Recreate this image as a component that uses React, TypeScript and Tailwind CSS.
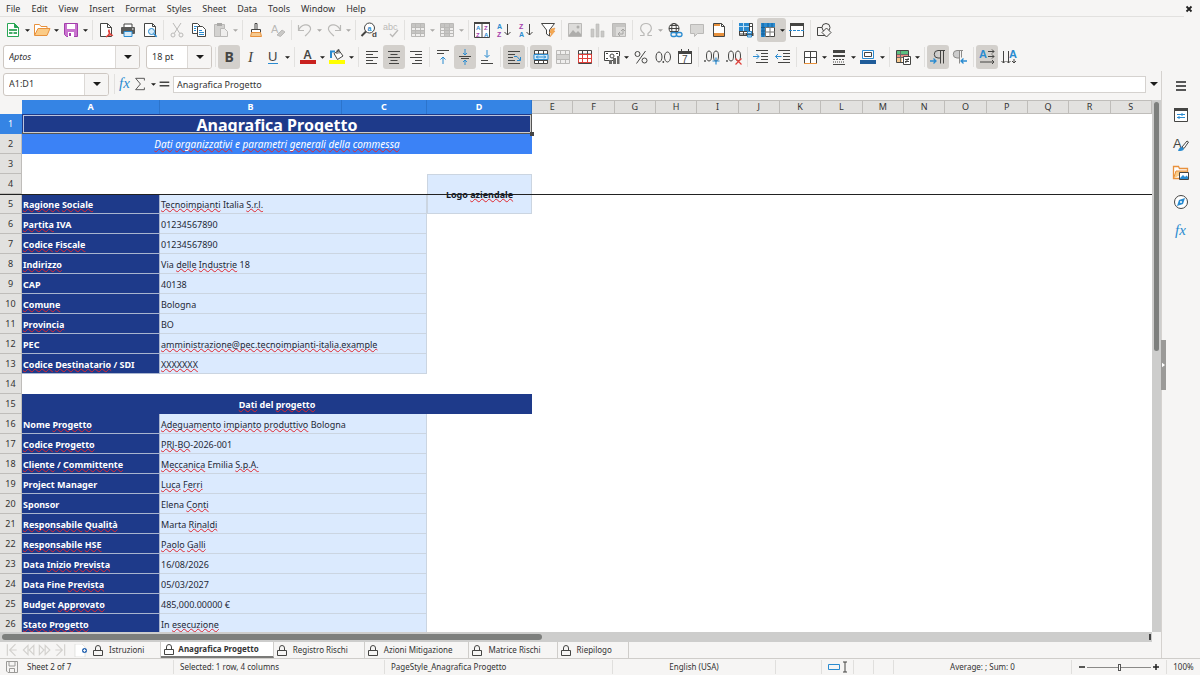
import type { ReactNode } from 'react'

type Tool = { icon: string; label: string; arrow?: boolean; on?: boolean; off?: boolean }

const MENUS = ['File', 'Edit', 'View', 'Insert', 'Format', 'Styles', 'Sheet', 'Data', 'Tools', 'Window', 'Help']

const INK = '#454543'
const BLUE = '#2a8bd0'
const MUTE = '#bab9b7'
const PURPLE = '#a33eab'
const ORANGE = '#e8913c'
const RED = '#e0403a'

/* ── Icons, all on a 16 × 16 board ─────────────────────────── */

const G = ({ s, w = 1, children }: { s: string; w?: number; children: ReactNode }) => (
  <g fill="none" stroke={s} strokeWidth={w}>{children}</g>
)

const T = ({ x, y, s, c, i, b, children }: { x: number; y: number; s: number; c: string; i?: boolean; b?: boolean; children: ReactNode }) => (
  <text x={x} y={y} fontSize={s} fill={c} fontWeight={b ? 700 : 400} fontStyle={i ? 'italic' : 'normal'} fontFamily={i ? 'Liberation Serif' : 'Liberation Sans'}>
    {children}
  </text>
)

const ICONS: Record<string, ReactNode> = {
  new: <><path d="M2.500 1.500h7l4 4v9h-11z" fill="#fff" stroke="#29a655" /><path d="M9.500 1.500v4h4z" fill="#29a655" stroke="#29a655" /><path d="M4 7h8v5H4z" fill="#46ad68" /><G s="#fff"><path d="M4 9.500h8M8 9v3" /></G></>,
  open: <><path d="M.5 13V2.500h5l1.500 2h6V7" fill="#fff" stroke={ORANGE} /><path d="M.5 13.500L4 6.500h12l-3 7z" fill="#fbcb86" stroke={ORANGE} /></>,
  save: <><path d="M1.500 1.500h13v13h-11l-2-2z" fill="#c974cf" stroke={PURPLE} /><path d="M4 2h8v5H4z" fill="#fff" /><path d="M5 10h6v5H5z" fill="#fff" /><path d="M6 11h2v3H6z" fill={PURPLE} /></>,
  pdf: <><path d="M2.500 1.500h7l4 4v9h-11z" fill="#fff" stroke={INK} /><G s={INK}><path d="M9.500 1.500v4h4" /></G><G s={RED} w={1.200}><path d="M8 15c3-2 4-5 3-7-1.500 1 1 5 4 5.500-2-1-5 0-7 1.500" /></G></>,
  print: <><path d="M4 2h8v4H4z" fill="#fff" stroke={INK} /><rect x="1" y="5" width="14" height="7" rx="1" fill="#5a5a58" /><path d="M4 9.500h8v5H4z" fill="#d7ebf8" stroke={BLUE} /><path d="M12 7h1.500" stroke="#fff" /></>,
  preview: <><path d="M2.500 1.500h8l3 3v10h-11z" fill="#fff" stroke={INK} /><G s={INK}><path d="M10.500 1.500v3h3" /></G><circle cx="9.500" cy="9.500" r="3" fill="#d8ecf9" stroke={BLUE} /><path d="M11.700 11.700l3 3" stroke={BLUE} strokeWidth="1.500" /></>,
  cut: <G s={MUTE}><path d="M4 1l6.500 10M12 1L5.500 11" /><circle cx="4" cy="13" r="2" /><circle cx="12" cy="13" r="2" /></G>,
  copy: <><path d="M1.500 1.500h5l3 3v7h-8z" fill="#fff" stroke={INK} /><path d="M6.500 4.500h5l3 3v7h-8z" fill="#fff" stroke={INK} /><G s={BLUE}><path d="M3 4.500h3M3 6.500h2M3 8.500h2M8 8.500h3M8 10.500h5M8 12.500h5" /></G></>,
  paste: <><path d="M1.500 2.500h10v12h-10z" fill="#d3d2d0" stroke={MUTE} /><path d="M4 1h5v3H4z" fill="#aaa9a7" /><path d="M7.500 6.500h4l3 3v5h-7z" fill="#efeeed" stroke={MUTE} /></>,
  brush: <><path d="M7 1.500h2v6H7z" fill="#fff" stroke={INK} /><path d="M3.500 7.500h9v3h-9z" fill="#fff" stroke={INK} /><path d="M3.500 10.500h9l1 4h-11z" fill="#f6c98f" stroke={ORANGE} /></>,
  clear: <><T x={1} y={11} s={11} c={MUTE}>A</T><path d="M7 13l5-5 3 2-4.500 4.500z" fill="#c9c8c6" stroke={MUTE} /></>,
  undo: <G s={MUTE} w={1.200}><path d="M1.500 3v5.500H7M1.500 8.500C4 2 12 1 13.500 6c.8 3-2 5-5.500 8" /></G>,
  redo: <G s={MUTE} w={1.200}><path d="M14.500 3v5.500H9M14.500 8.500C12 2 4 1 2.500 6c-.8 3 2 5 5.500 8" /></G>,
  find: <><circle cx="8.500" cy="6" r="5" fill="#fff" stroke={INK} /><path d="M5 9.500L.5 14" stroke={INK} strokeWidth="2" /><T x={6.500} y={8.500} s={7} c={BLUE} b>a</T><T x={11} y={15} s={8} c={INK} b>d</T></>,
  spell: <><T x={0} y={8} s={9} c={MUTE}>abc</T><G s={MUTE} w={1.300}><path d="M7 12l2.500 2.500L15 8" /></G></>,
  rows: <><path d="M1.500 1.500h13v13h-13z" fill="#efeeed" stroke={MUTE} /><path d="M2 2h12v3H2zM2 8h12v3H2z" fill="#c6c5c3" /><G s={MUTE}><path d="M2 5.500h12M2 8.500h12M2 11.500h12M5.500 2v12M10.500 2v12" /></G></>,
  cols: <><path d="M1.500 1.500h13v13h-13z" fill="#efeeed" stroke={MUTE} /><path d="M2 2h12v3H2zM6 5h4v9H6z" fill="#c6c5c3" /><G s={MUTE}><path d="M2 5.500h12M2 8.500h12M2 11.500h12M5.500 2v12M10.500 2v12" /></G></>,
  sort: <><path d="M.5 1.500h15v14H.5z" fill="#fff" stroke={INK} /><path d="M0 0h16v2H0z" fill={INK} /><G s={INK}><path d="M8 2v13" /></G><T x={2} y={8} s={6} c={BLUE} b>A</T><T x={2} y={14.500} s={6} c={PURPLE} b>Z</T><T x={10} y={8} s={6} c={PURPLE} b>Z</T><T x={10} y={14.500} s={6} c={BLUE} b>A</T></>,
  az: <><T x={1} y={7} s={7} c={BLUE} b>A</T><T x={1} y={15} s={7} c={PURPLE} b>Z</T><G s={INK}><path d="M11.500 2v11M8.500 10l3 3 3-3" /></G></>,
  za: <><T x={1} y={7} s={7} c={PURPLE} b>Z</T><T x={1} y={15} s={7} c={BLUE} b>A</T><G s={INK}><path d="M11.500 2v11M8.500 10l3 3 3-3" /></G></>,
  filter: <><path d="M1.500 1.500h13L9.500 8v6l-3-2V8z" fill="#fff" stroke={INK} /><path d="M11 7l4-1-1.500 3H15l-5 6 1.500-4H9.500z" fill="#f4a952" stroke={ORANGE} strokeWidth=".5" /></>,
  image: <><path d="M1.500 1.500h13v13h-13z" fill="#dddcda" stroke={MUTE} /><path d="M2 13l4-5 3 3 2-2 3 3v2H2z" fill="#aeadab" /><circle cx="11" cy="5" r="1.500" fill="#aeadab" /></>,
  chart: <><path d="M2 7h3v8H2zM7 2h3v13H7zM12 9h3v6h-3z" fill="#c9c8c6" stroke={MUTE} strokeWidth=".6" /></>,
  pivot: <><path d="M1.500 1.500h13v13h-13z" fill="#dddcda" stroke={MUTE} /><path d="M2 2h12v3H2zM2 2h3v12H2z" fill="#c6c5c3" /><G s="#a5a4a2"><path d="M7 12h5V7M10 9l2-2 2 2M9 10l-2 2 2 2" /></G></>,
  omega: <G s={MUTE} w={1.200}><path d="M2 13.500h4v-2C0 7 3 1.500 8 1.500S16 7 10 11.500v2h4" /></G>,
  globe: <><G s={INK}><circle cx="7" cy="6.500" r="5" /><ellipse cx="7" cy="6.500" rx="2.300" ry="5" /><path d="M2 6.500h10M3 3.500h8M3 9.500h8" /></G><G s={BLUE} w={1.300}><rect x="4" y="10.500" width="5.500" height="4" rx="2" fill="#f6f5f4" /><rect x="9.500" y="10.500" width="5.500" height="4" rx="2" fill="#f6f5f4" /></G></>,
  comment: <path d="M1.500 2.500h13v9h-6l-3 3v-3h-4z" fill="#d8d7d5" stroke={MUTE} />,
  header: <><path d="M2.500 1.500h8l3 3v10h-11z" fill="#fff" stroke={INK} /><G s={INK}><path d="M10.500 1.500v3h3" /></G><path d="M3 2h6v2H3zM3 11h10v3H3z" fill={ORANGE} /></>,
  printrange: <><path d="M1.500 1.500h13v12h-13z" fill="#fff" stroke={INK} /><path d="M1 1h10v8H1z" fill={BLUE} /><G s={INK}><path d="M1.500 9.500h12M5.500 9v5M11.500 1v8M1.500 12h6M11 4.500h3" /></G><G s="#bfe0f5"><path d="M1 4.500h10M5.500 1v8" /></G><path d="M7.500 11h8v3h-8z" fill={INK} /><path d="M9.500 9.500h4v2h-4zM9.500 13h4v2h-4z" fill="#d7ebf8" stroke={BLUE} /></>,
  freeze: <><path d="M1.500 1.500h13v13h-13z" fill="#fff" stroke={INK} /><path d="M1 1h14v4H5v10H1z" fill={BLUE} /><G s="#12609c"><path d="M1 5.500h4M3 1v14M8 1v4M12 1v4M1 9h4M1 12h4" /></G><G s="#777775"><path d="M5.500 5v10M5 5.500h10M10 6v9M6 10h9" /></G></>,
  split: <><path d="M1.500 2.500h13v12h-13z" fill="#fff" stroke={INK} /><path d="M1 1h14v3H1z" fill={INK} /><path d="M0 8.500h16" stroke={BLUE} strokeDasharray="3 1" /></>,
  shapes: <g fill="#f6f5f4" stroke={INK}><path d="M1.500 5.500h8v8h-8z" /><circle cx="10" cy="5.500" r="4" /><path d="M10.500 6l4.500 4.500-4.500 4.500L6 10.500z" /></g>,

  bold: <text x="3.500" y="13" fontSize="14" fontWeight="700" fontFamily="Noto Sans" fill={INK}>B</text>,
  italic: <T x={5} y={13} s={15} c={INK} i>I</T>,
  under: <><T x={3} y={12} s={13} c={INK}>U</T><path d="M3 14.500h10" stroke={BLUE} /></>,
  color: <><text x="3.500" y="10" fontSize="12" fontWeight="600" fontFamily="Noto Sans" fill={INK}>A</text><path d="M0 11h16v4H0z" fill="#c9211e" /></>,
  fill: <><path d="M5 4.500l5-3 4 5.500-5.500 3.500z" fill="#fff" stroke={INK} /><path d="M8 5V1.500l2-1v4" fill="none" stroke={INK} /><path d="M2 9V2.500h4" stroke={BLUE} strokeWidth="2" fill="none" /><path d="M0 11h16v4H0z" fill="#ffff00" /></>,
  left: <G s={INK}><path d="M2 2.500h12M2 5.500h7M2 8.500h12M2 11.500h7M2 14.500h11" /></G>,
  center: <G s={INK}><path d="M2 2.500h12M4.500 5.500h7M2 8.500h12M4.500 11.500h7M3 14.500h10" /></G>,
  right: <G s={INK}><path d="M2 2.500h12M7 5.500h7M2 8.500h12M7 11.500h7M4 14.500h10" /></G>,
  vtop: <><G s={INK}><path d="M2 1.500h12M2 4.500h7" /></G><G s={BLUE}><path d="M8 15V8M5.500 10.500L8 8l2.500 2.500" /></G></>,
  vmid: <><G s={INK}><path d="M2 7.500h12M4 9.500h8" /></G><G s={BLUE}><path d="M8 0v6M6 4l2 2 2-2M8 16v-5M6 13l2-2 2 2" /></G></>,
  vbot: <><G s={INK}><path d="M2 14.500h12M2 11.500h7" /></G><G s={BLUE}><path d="M8 1v7M5.500 6L8 8.500 10.500 6" /></G></>,
  wrap: <><G s={INK}><path d="M2 2.500h12M2 5.500h7M2 8.500h5M2 11.500h7M2 14.500h12" /></G><G s={BLUE}><path d="M8 7.500h3l3.500 4M11 11.500h3.500V8" /></G></>,
  merge: <><path d="M1.500 1.500h13v13h-13z" fill="#fff" stroke={INK} /><G s={INK}><path d="M1 5h14M5.500 1v4M10.500 1v4M1 11.500h14M5.500 11v4M10.500 11v4" /></G><path d="M1 5.500h14v5H1z" fill="#d3ebfa" stroke={BLUE} /><G s={BLUE}><path d="M3 8h10M5 6.500L3.500 8 5 9.500M11 6.500L12.500 8 11 9.500" /></G></>,
  mergeoff: <><path d="M1.500 1.500h13v13h-13z" fill="#efeeed" stroke={MUTE} /><G s={MUTE}><path d="M1 5.500h14M1 10.500h14M5.500 1v4M10.500 1v4M5.500 11v4M10.500 11v4" /></G><path d="M2 6h12v4H2z" fill="#d3d2d0" /></>,
  unmerge: <><path d="M1.500 1.500h13v13h-13z" fill="#fff" stroke={INK} /><G s={INK}><path d="M1 5h14M5.500 1v4M10.500 1v4" /></G><G s={RED}><path d="M1.500 5.500h13v8h-13zM5.500 5v9M10.500 5v9M1 9.500h14" /></G></>,
  currency: <><path d="M12 11.500H.5v-9h15V7" fill="#fff" stroke={INK} /><circle cx="8" cy="7" r="2" fill="none" stroke={INK} /><path d="M2 4.500h2M12 4.500h2M2 9.500h2" stroke={INK} /><path d="M5 11h3v4H5zM9 9h3v6H9zM13 7h2.500v8H13z" fill="#6b6b69" /></>,
  percent: <G s={INK}><circle cx="4.500" cy="5" r="2.500" /><circle cx="11.500" cy="11.500" r="2.500" /><path d="M12.500 2l-9 12.500" /></G>,
  number: <><G s={INK}><ellipse cx="4" cy="8" rx="3" ry="5" /><ellipse cx="12.500" cy="8" rx="3" ry="5" /></G><circle cx="8.300" cy="13" r=".9" fill={INK} /></>,
  date: <><path d="M1.500 2.500h13v12h-13z" fill="#fff" stroke={INK} /><path d="M1 2h14v3H1z" fill={INK} /><path d="M4.500 0v4M11.500 0v4" stroke={INK} /><T x={5} y={13.500} s={10} c={INK}>7</T></>,
  decadd: <><circle cx="1" cy="12" r=".9" fill={INK} /><G s={INK}><ellipse cx="5" cy="7" rx="2.500" ry="5" /><ellipse cx="12" cy="7" rx="2.500" ry="5" /></G><G s={BLUE} w={1.200}><path d="M12 8.500v7M8.500 12h7" /></G></>,
  decdel: <><circle cx="1" cy="12" r=".9" fill={INK} /><G s={INK}><ellipse cx="5" cy="7" rx="2.500" ry="5" /><ellipse cx="12" cy="7" rx="2.500" ry="5" /></G><G s={RED} w={1.200}><path d="M9.500 9.500l6 6M15.500 9.500l-6 6" /></G></>,
  indent: <><G s={INK}><path d="M3 1.500h12M8 4.500h7M8 7.500h7M8 10.500h7M3 13.500h12" /></G><G s={BLUE}><path d="M0 7.500h6M3.500 5L6 7.500 3.500 10" /></G></>,
  outdent: <><G s={INK}><path d="M3 1.500h12M8 4.500h7M8 7.500h7M8 10.500h7M3 13.500h12" /></G><G s={BLUE}><path d="M6.500 7.500h-6M3 5L.5 7.500 3 10" /></G></>,
  borders: <><path d="M2.500 2.500h12v12h-12z" fill="#fff" stroke={INK} /><G s={INK}><path d="M8.500 2v12M2 8.500h12" /></G><path d="M2 14.500h13" stroke={ORANGE} /></>,
  lines: <><path d="M2 1h12v3H2zM2 6h12v2H2z" fill={INK} /><G s={INK}><path d="M2 10.500h12" strokeDasharray="2 1" /><path d="M2 13h12" strokeDasharray="1 1" /><path d="M2 15.500h12" /></G></>,
  bordercolor: <><path d="M2.500 1.500h11v8h-11z" fill="#fff" stroke={BLUE} /><path d="M4.500 3.500h7v4h-7z" fill="none" stroke={INK} /><path d="M0 11h16v4H0z" fill="#1f5c99" /></>,
  cond: <><path d="M1.500 1.500h12v12h-12z" fill="#fff" stroke={INK} /><path d="M2 2h11v3H2z" fill="#5cbf80" /><path d="M2 5h11v3H2z" fill="#ee8b84" /><path d="M2 8h5v5H2z" fill="#f6c98f" /><G s="#6b6b69"><path d="M2 5.500h11M2 8.500h11M5.500 2v11" /></G><path d="M8.500 7.500h7v8h-7z" fill="#fff" stroke={INK} /><G s={INK}><path d="M10 10.500h4M10 12.500h4M13.500 9l-3 5" /></G></>,
  ltr: <><path d="M8 2a3.500 3.500 0 000 7z" fill="#ccc" /><G s={INK}><path d="M15 1.500H8a3.700 3.700 0 000 7.500h2M10.500 1.500v13M13.500 1.500v13" /></G><G s={BLUE} w={1.300}><path d="M0 12h6M3.500 9.500L6 12l-2.500 2.500" /></G></>,
  rtl: <><path d="M5 1.500a3.700 3.700 0 000 7.500h2V1.500z" fill="#ccc" /><G s="#8c8b89"><path d="M11 1.500H5a3.700 3.700 0 000 7.500h2M7.500 1.500v13M9.500 1.500v7" /></G><G s={BLUE} w={1.300}><path d="M15 12H9M11.500 9.500L9 12l2.500 2.500" /></G></>,
  texth: <><T x={0} y={9} s={11} c={BLUE} b>A</T><G s={INK}><path d="M9 2.500h6M13 .5l2 2-2 2M9 7.500h6M13 5.500l2 2-2 2M1 13h14M13 11l2 2-2 2" /></G></>,
  textv: <><T x={8} y={9} s={11} c={BLUE} b>A</T><G s={INK}><path d="M2.500 2v12M.5 12l2 2 2-2M7.500 2v12M5.500 12l2 2 2-2M13 10v4M11 12l2 2 2-2" /></G></>,

  fx: <T x={2} y={12} s={15} c={BLUE} i>fx</T>,
  sum: <path d="M13 4V1.500H3L8.500 8 3 14.500h10V12" fill="none" stroke={INK} />,
  eq: <path d="M3 6h11M3 10h11" stroke={INK} strokeWidth="1.800" />,

  menu: <path d="M3 4h10M3 8h10M3 12h10" stroke="#222" strokeWidth="1.500" />,
  props: <><path d="M1.500 2.500h13v12h-13z" fill="#fff" stroke={INK} /><path d="M1 1h14v3H1z" fill={INK} /><G s={BLUE}><path d="M4 7.500h8M4 10.500h8M9 6v3M6 9v3" /></G></>,
  styles: <><T x={0} y={12} s={13} c={INK}>A</T><path d="M9 11l5-6 1.500 1-4.500 6.500z" fill="#fff" stroke={INK} /><path d="M5 15c1-3 2-4 4-4l2 2c-1 2-3 2-6 2z" fill={BLUE} /></>,
  gallery: <><path d="M.5 13.500v-12h5l1 2h8v10z" fill="#fff" stroke={ORANGE} strokeWidth="1.300" /><path d="M.5 13.500L3 6h12" fill="#fbcb86" stroke={ORANGE} /><path d="M6.500 7.500h9v7h-9z" fill="#fff" stroke={INK} /><path d="M7 13l3-3 2 2 1.500-1.500L15 12v2H7z" fill={BLUE} /></>,
  navigator: <><circle cx="8" cy="8" r="6.500" fill="#fff" stroke={INK} /><path d="M12 4l-2 6-6 2 2-6z" fill={BLUE} /><circle cx="8" cy="8" r="1" fill="#fff" /></>,
}

const Icon = ({ name, size = 'size-4' }: { name: string; size?: string }) => (
  <svg viewBox="0 0 16 16" className={`${size} shrink-0 overflow-visible`} aria-hidden="true">{ICONS[name]}</svg>
)

const Caret = ({ muted = false, big = false }: { muted?: boolean; big?: boolean }) => (
  <svg viewBox="0 0 8 4" className={big ? 'w-2 h-1 shrink-0' : 'w-[5px] h-[3px] shrink-0'} aria-hidden="true">
    <path d="M0 0h8L4 4z" fill={muted ? '#aaa9a7' : '#1c1c1b'} />
  </svg>
)

/* ── Toolbars ──────────────────────────────────────────────── */

const STANDARD: Tool[][] = [
  [{ icon: 'new', label: 'New', arrow: true }, { icon: 'open', label: 'Open', arrow: true }, { icon: 'save', label: 'Save', arrow: true }],
  [{ icon: 'pdf', label: 'Export as PDF' }, { icon: 'print', label: 'Print' }, { icon: 'preview', label: 'Print Preview' }],
  [{ icon: 'cut', label: 'Cut', off: true }, { icon: 'copy', label: 'Copy' }, { icon: 'paste', label: 'Paste', arrow: true, off: true }],
  [{ icon: 'brush', label: 'Clone Formatting' }, { icon: 'clear', label: 'Clear Formatting', off: true }],
  [{ icon: 'undo', label: 'Undo', arrow: true, off: true }, { icon: 'redo', label: 'Redo', arrow: true, off: true }],
  [{ icon: 'find', label: 'Find and Replace' }, { icon: 'spell', label: 'Spelling', off: true }],
  [{ icon: 'rows', label: 'Row', arrow: true, off: true }, { icon: 'cols', label: 'Column', arrow: true, off: true }],
  [{ icon: 'sort', label: 'Sort' }, { icon: 'az', label: 'Sort Ascending' }, { icon: 'za', label: 'Sort Descending' }, { icon: 'filter', label: 'AutoFilter' }],
  [{ icon: 'image', label: 'Insert Image', off: true }, { icon: 'chart', label: 'Insert Chart', off: true }, { icon: 'pivot', label: 'Pivot Table', off: true }],
  [{ icon: 'omega', label: 'Special Character', arrow: true, off: true }, { icon: 'globe', label: 'Hyperlink' }, { icon: 'comment', label: 'Comment', off: true }, { icon: 'header', label: 'Headers and Footers' }],
  [{ icon: 'printrange', label: 'Define Print Area' }, { icon: 'freeze', label: 'Freeze Rows and Columns', arrow: true, on: true }, { icon: 'split', label: 'Split Window' }],
  [{ icon: 'shapes', label: 'Show Draw Functions' }],
]

const FORMATTING: Tool[][] = [
  [{ icon: 'bold', label: 'Bold', on: true }, { icon: 'italic', label: 'Italic' }, { icon: 'under', label: 'Underline', arrow: true }],
  [{ icon: 'color', label: 'Font Color', arrow: true }, { icon: 'fill', label: 'Background Color', arrow: true }],
  [{ icon: 'left', label: 'Align Left' }, { icon: 'center', label: 'Align Center', on: true }, { icon: 'right', label: 'Align Right' }],
  [{ icon: 'vtop', label: 'Align Top' }, { icon: 'vmid', label: 'Center Vertically', on: true }, { icon: 'vbot', label: 'Align Bottom' }],
  [{ icon: 'wrap', label: 'Wrap Text', on: true }],
  [{ icon: 'merge', label: 'Merge and Center', on: true }, { icon: 'mergeoff', label: 'Merge Cells', off: true }, { icon: 'unmerge', label: 'Unmerge Cells' }],
  [{ icon: 'currency', label: 'Currency', arrow: true }, { icon: 'percent', label: 'Percent' }, { icon: 'number', label: 'Number' }, { icon: 'date', label: 'Date' }],
  [{ icon: 'decadd', label: 'Add Decimal Place' }, { icon: 'decdel', label: 'Delete Decimal Place' }],
  [{ icon: 'indent', label: 'Increase Indent' }, { icon: 'outdent', label: 'Decrease Indent' }],
  [{ icon: 'borders', label: 'Borders', arrow: true }, { icon: 'lines', label: 'Border Style', arrow: true }, { icon: 'bordercolor', label: 'Border Color', arrow: true }],
  [{ icon: 'cond', label: 'Conditional', arrow: true }],
  [{ icon: 'ltr', label: 'Left-To-Right', on: true }, { icon: 'rtl', label: 'Right-To-Left' }],
  [{ icon: 'texth', label: 'Text Horizontal', on: true }, { icon: 'textv', label: 'Text Vertical' }],
]

const Sep = ({ wide = false }: { wide?: boolean }) => (
  <span className={`${wide ? 'w-1.5' : 'w-[5px]'} h-5 shrink-0 flex justify-center`}>
    <span className="w-px bg-[#e2e1df]" />
  </span>
)

function ToolButton({ tool }: { tool: Tool }) {
  return (
    <div className={`flex items-center h-6 rounded-[3px] shrink-0 ${tool.on ? 'bg-[#d3d0cc]' : ''}`}>
      <button aria-label={tool.label} disabled={tool.off} className="w-[22px] h-6 flex items-center justify-center">
        <Icon name={tool.icon} />
      </button>
      {tool.arrow && (
        <button aria-label={`${tool.label} options`} disabled={tool.off} className="w-[7px] h-6 flex items-center justify-center">
          <Caret muted={tool.off} />
        </button>
      )}
    </div>
  )
}

function Tools({ groups }: { groups: Tool[][] }) {
  return groups.map((group, i) => (
    <div key={i} className="flex items-center shrink-0">
      {group.map(t => <ToolButton key={t.icon} tool={t} />)}
      {i < groups.length - 1 && <Sep wide={group[group.length - 1].arrow} />}
    </div>
  ))
}

function Combo({ label, value, options, className }: { label: string; value: string; options: string[]; className: string }) {
  return (
    <div className={`relative flex shrink-0 rounded-[3px] border border-[#cdc7c2] bg-white overflow-hidden ${className}`}>
      <select aria-label={label} defaultValue={value} className="appearance-none w-full pl-[5px] bg-transparent outline-none">
        {options.map(o => <option key={o}>{o}</option>)}
      </select>
      <span className="absolute inset-y-0 right-0 w-6 flex items-center justify-center border-l border-[#dcd9d6] bg-[#f6f5f4] pointer-events-none">
        <Caret big />
      </span>
    </div>
  )
}

/* ── Sheet data; words between bars are flagged by the spell checker ── */

const COLS = ['E', 'F', 'G', 'H', 'I', 'J', 'K', 'L', 'M', 'N', 'O', 'P', 'Q', 'R', 'S']

const ROWS: Record<number, [string, string]> = {
  5: ['|Ragione| |Sociale|', '|Tecnoimpianti| Italia |S.r.l.|'],
  6: ['|Partita| IVA', '01234567890'],
  7: ['|Codice| |Fiscale|', '01234567890'],
  8: ['|Indirizzo|', 'Via |delle| |Industrie| 18'],
  9: ['CAP', '40138'],
  10: ['|Comune|', 'Bologna'],
  11: ['|Provincia|', 'BO'],
  12: ['PEC', '|amministrazione@pec.tecnoimpianti-italia.example|'],
  13: ['|Codice| |Destinatario| / SDI', '|XXXXXXX|'],
  16: ['Nome |Progetto|', '|Adeguamento| |impianto| |produttivo| Bologna'],
  17: ['|Codice| |Progetto|', '|PRJ-BO|-2026-001'],
  18: ['|Cliente| / |Committente|', '|Meccanica| Emilia |S.p.A.|'],
  19: ['Project Manager', '|Luca| |Ferri|'],
  20: ['Sponsor', 'Elena |Conti|'],
  21: ['|Responsabile| |Qualità|', 'Marta |Rinaldi|'],
  22: ['|Responsabile| |HSE|', '|Paolo| |Galli|'],
  23: ['Data |Inizio| |Prevista|', '16/08/2026'],
  24: ['Data Fine |Prevista|', '05/03/2027'],
  25: ['Budget |Approvato|', '485,000.00000 €'],
  26: ['|Stato| |Progetto|', 'In |esecuzione|'],
}

const Spelled = ({ text }: { text: string }) => text.split('|').map((part, i) =>
  i % 2 ? (
    <span key={i} className="underline decoration-wavy decoration-[#e0282e] decoration-1 underline-offset-0 [text-decoration-skip-ink:none]">{part}</span>
  ) : part
)

function SheetRow({ n }: { n: number }) {
  const data = ROWS[n]
  return (
    <tr className="h-5">
      <th scope="row" className={`p-0 font-normal border-b border-r ${n === 1 ? 'bg-[#3584e4] text-white font-bold border-[#3584e4]' : 'bg-[#e2e1df] border-[#bfbdba]'}`}>
        {n}
      </th>
      {n === 1 && (
        <td colSpan={4} className="relative p-0 align-top bg-[#1e3a8a] text-white text-center font-bold text-[16px] leading-[22px]">
          <div className="h-[18px] overflow-hidden"><Spelled text="|Anagrafica| |Progetto|" /></div>
          <span className="absolute inset-0 border-b-2 border-r-2 border-[#555] outline-1 -outline-offset-2 outline-white/70" />
          <span className="absolute -bottom-0.5 -right-0.5 size-1 bg-[#444]" />
        </td>
      )}
      {n === 2 && (
        <td colSpan={4} className="p-0 bg-[#3b82f6] text-white text-center italic text-[10px] leading-[14px]">
          <Spelled text="|Dati| |organizzativi| e |parametri| |generali| |della| |commessa|" />
        </td>
      )}
      {n === 15 && (
        <td colSpan={4} className="p-0 pt-px bg-[#1e3a8a] text-white text-center font-bold"><Spelled text="|Dati| del |progetto|" /></td>
      )}
      {n === 4 && <td colSpan={3} />}
      {data && (
        <>
          <td className="p-0 pl-px pt-0.5 bg-[#1e3a8a] text-white font-bold border-b border-r border-[#a9b5cf] whitespace-nowrap">
            <Spelled text={data[0]} />
          </td>
          <td colSpan={2} className="p-0 pl-px pt-0.5 bg-[#dbeafe] text-[#1f2937] border-b border-r border-[#cbd5e1] whitespace-nowrap">
            <Spelled text={data[1]} />
          </td>
        </>
      )}
      {n === 4 && (
        <td rowSpan={2} className="p-0 pt-0.5 bg-[#dbeafe] text-[#111827] text-center font-bold border border-[#cbd5e1]">
          Logo <Spelled text="|aziendale|" />
        </td>
      )}
    </tr>
  )
}

function Sheet() {
  return (
    <div className="relative flex-1 min-w-0 overflow-hidden bg-white">
      <table className="w-full table-fixed border-separate border-spacing-0 text-left text-[9px] leading-[12px]">
        <colgroup>
          <col className="w-[22px]" />
          <col className="w-[138px]" />
          <col className="w-[182px]" />
          <col className="w-[85px]" />
          <col className="w-[105px]" />
          {COLS.map(c => <col key={c} />)}
        </colgroup>
        <thead>
          <tr className="h-[14px] text-center">
            <td className="p-0 bg-[#f6f5f4]" />
            {['A', 'B', 'C', 'D'].map(c => (
              <th key={c} scope="col" className="p-0 bg-[#3584e4] text-white border-r border-[#2c74cc]">{c}</th>
            ))}
            {COLS.map(c => (
              <th key={c} scope="col" className="p-0 font-normal bg-[#e2e1df] border-r border-b border-t border-[#bfbdba]">{c}</th>
            ))}
          </tr>
        </thead>
        <tbody className="[&_th]:text-center">
          {Array.from({ length: 26 }, (_, i) => <SheetRow key={i} n={i + 1} />)}
        </tbody>
      </table>
      {/* frozen rows end below row 4 */}
      <span className="absolute left-0 right-0 top-[94px] h-px bg-[#222]" />
    </div>
  )
}

/* ── Bottom bars ───────────────────────────────────────────── */

const TABS = ['Istruzioni', 'Anagrafica Progetto', 'Registro Rischi', 'Azioni Mitigazione', 'Matrice Rischi', 'Riepilogo']

const Lock = () => (
  <svg viewBox="0 0 10 12" className="w-2.5 h-3 shrink-0" fill="none" stroke={INK} aria-hidden="true">
    <path d="M.5 6.500h9v5h-9zM2.500 6.500V4a2.500 2.500 0 015 0v2.500" />
  </svg>
)

const NAV = [
  { label: 'First sheet', d: 'M2 1v10M9 1L4 6l5 5M4 6h6' },
  { label: 'Previous sheet', d: 'M6 2L2 6l4 4zM11 2L7 6l4 4z' },
  { label: 'Next sheet', d: 'M2 2l4 4-4 4zM7 2l4 4-4 4z' },
  { label: 'Last sheet', d: 'M10 1v10M3 1l5 5-5 5M2 6h6' },
]

function SheetTabs() {
  return (
    <div className="flex items-center h-4 pl-1 text-[8px]">
      {NAV.map(n => (
        <button key={n.label} aria-label={n.label} disabled className="w-4 flex justify-center">
          <svg viewBox="0 0 12 12" className="size-3.5" fill="none" stroke="#d3d1ce"><path d={n.d} /></svg>
        </button>
      ))}
      <button aria-label="Add sheet" className="w-[22px] pl-1.5">
        <svg viewBox="0 0 14 13" className="w-3.5 h-[13px]">
          <path d="M1 0h7l3 3v10H1z" fill="#fff" stroke="#d5d3d0" strokeWidth=".6" />
          <circle cx="10.500" cy="6.500" r="2.500" fill="#2d69b3" />
          <path d="M9 6.500h3M10.500 5v3" stroke="#fff" strokeWidth=".8" />
        </svg>
      </button>
      <div role="tablist" className="flex h-4">
        {TABS.map((t, i) => (
          <button
            key={t}
            role="tab"
            aria-selected={i === 1}
            className={`flex items-center pl-[3px] border-r border-[#cfcdca] whitespace-nowrap ${i === 1 ? 'gap-1 pr-3.5 bg-white font-bold border-b-2 border-b-[#7a7a78]' : 'gap-1.5 pr-4'}`}
          >
            <Lock />{t}
          </button>
        ))}
      </div>
    </div>
  )
}

function StatusBar() {
  const cell = 'flex items-center h-3.5 border-r border-[#e0dfdd] whitespace-nowrap shrink-0'
  return (
    <footer className="flex items-center h-[17px] border-t border-[#cfcdca] text-[8px]">
      <span className="w-[21px] pl-1.5 shrink-0">
        <svg viewBox="0 0 12 12" className="size-3" fill="none" stroke="#9b9a98"><path d="M.5.5h11v11H2L.5 10zM3 1v4h6V1M3.500 11V7.500h5V11" /></svg>
      </span>
      <span className={`${cell} w-[153px] pl-1.5`}>Sheet 2 of 7</span>
      <span className={`${cell} w-[211px] pl-1.5`}>Selected: 1 row, 4 columns</span>
      <span className={`${cell} w-[228px] pl-1.5`}>PageStyle_Anagrafica Progetto</span>
      <span className={`${cell} w-[163px] justify-center`}>English (USA)</span>
      <span className={`${cell} w-[46px]`} />
      <span className={`${cell} w-8 justify-center`}>
        <svg viewBox="0 0 20 12" className="w-5 h-3" fill="none"><path d="M.5 3.500h11v5H.5z" stroke={BLUE} /><path d="M15 1h4M17 1v10M15 11h4" stroke={INK} /></svg>
      </span>
      <span className={`${cell} w-5`} />
      <span className={`${cell} w-5`} />
      <span className="flex-1 text-center whitespace-nowrap">Average: ; Sum: 0</span>
      <span className={`${cell} w-24 border-l justify-between px-1.5`}>
        <button aria-label="Zoom out" className="w-2 flex"><svg viewBox="0 0 8 8" className="size-2"><path d="M1 4h6" stroke="#222" strokeWidth="1.500" /></svg></button>
        <input
          type="range"
          aria-label="Zoom"
          defaultValue={50}
          className="appearance-none w-16 h-px bg-[#8b8a88] [&::-webkit-slider-thumb]:appearance-none [&::-webkit-slider-thumb]:w-[3px] [&::-webkit-slider-thumb]:h-[7px] [&::-webkit-slider-thumb]:border [&::-webkit-slider-thumb]:border-[#555] [&::-webkit-slider-thumb]:bg-white"
        />
        <button aria-label="Zoom in" className="w-2 flex"><svg viewBox="0 0 8 8" className="size-2"><path d="M1 4h6M4 1v6" stroke="#222" strokeWidth="1.500" /></svg></button>
      </span>
      <span className="w-[33px] text-center shrink-0">100%</span>
    </footer>
  )
}

export default function App() {
  return (
    <div className="flex flex-col h-screen overflow-hidden bg-[#f6f5f4] text-[#333] text-[9px] leading-[12px] font-['Noto_Sans',sans-serif]">
      <nav className="flex items-center gap-[11px] h-4 pl-1.5 pt-px">
        {MENUS.map(m => <button key={m}>{m}</button>)}
        <button aria-label="Close document" className="ml-auto mr-[7px]">
          <svg viewBox="0 0 8 8" className="size-2"><path d="M1.500 1.500l5 5M6.500 1.500l-5 5" stroke="#222" strokeWidth="1.800" /></svg>
        </button>
      </nav>

      <div role="toolbar" aria-label="Standard" className="flex items-center h-[27px] mr-4 pl-0.5 border-t border-[#e2e1df]">
        <Tools groups={STANDARD} />
      </div>

      <div role="toolbar" aria-label="Formatting" className="flex items-center h-7 pl-[3px]">
        <Combo label="Font Name" value="Aptos" options={['Aptos', 'Liberation Sans', 'Noto Sans']} className="w-[137px] h-6 mr-1.5 italic" />
        <Combo label="Font Size" value="18 pt" options={['10 pt', '12 pt', '18 pt']} className="w-[66px] h-6" />
        <Sep wide />
        <Tools groups={FORMATTING} />
      </div>

      <div className="flex flex-1 min-h-0">
        <main className="flex flex-col flex-1 min-w-0 border-r border-[#d5d2cf]">
          <div className="flex items-center h-[29px] pl-[3px] pb-[3px]">
            <Combo label="Name Box" value="A1:D1" options={['A1:D1']} className="w-[106px] h-[23px] mr-[3px]" />
            <Sep />
            <button aria-label="Function Wizard" className="w-4 flex"><Icon name="fx" /></button>
            <button aria-label="Select Function" className="w-6 flex items-center gap-1"><Icon name="sum" size="size-3.5" /><Caret /></button>
            <button aria-label="Formula" className="w-4 flex"><Icon name="eq" size="size-3.5" /></button>
            <input aria-label="Input line" defaultValue="Anagrafica Progetto" className="flex-1 min-w-0 h-[17px] px-[3px] bg-white border border-[#d5d2cf] outline-none" />
            <button aria-label="Expand Formula Bar" className="w-[15px] flex justify-center"><Caret big /></button>
          </div>

          <div className="flex flex-1 min-h-0">
            <Sheet />
            <div className="w-[9px] shrink-0 px-0.5 pt-0.5 bg-[#cdcdcc]">
              <div className="h-[47%] rounded-full bg-[#7d7f7d]" />
            </div>
          </div>

          <div className="h-2.5 mr-[9px] flex items-center justify-between pl-0.5 pr-px bg-[#cdcdcc]">
            <div className="w-[47%] h-1.5 rounded-full bg-[#7d7f7d]" />
            <span className="w-0.5 h-1.5 bg-[#444]" />
          </div>

          <SheetTabs />
        </main>

        <aside className="relative flex flex-col items-center w-[38px] shrink-0">
          {['menu', 'props', 'styles', 'gallery', 'navigator', 'fx'].map(n => (
            <button key={n} aria-label={n} className="h-[29px] flex items-center"><Icon name={n} /></button>
          ))}
          <button aria-label="Hide sidebar" className="absolute -left-px top-1/2 -mt-[25px] w-[5px] h-[50px] flex items-center justify-center bg-[#9b9a98]">
            <svg viewBox="0 0 4 6" className="w-[3px] h-1.5"><path d="M0 0l4 3-4 3z" fill="#fff" /></svg>
          </button>
        </aside>
      </div>

      <StatusBar />
    </div>
  )
}
